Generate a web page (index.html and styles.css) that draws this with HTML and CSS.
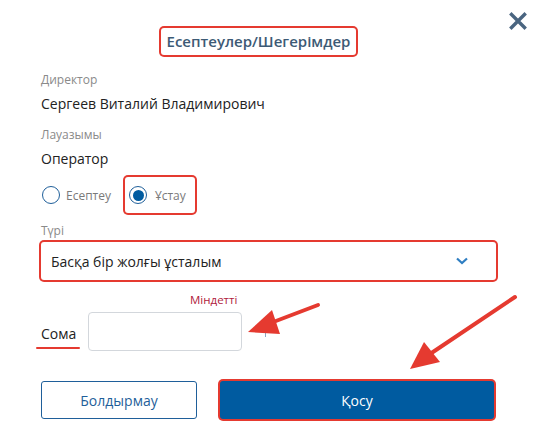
FILE: index.html
```html
<!DOCTYPE html>
<html lang="kk">
  <head>
    <meta charset="UTF-8" />
    <title>Есептеулер/Шегерімдер</title>
    <link rel="stylesheet" href="styles.css">
  </head>
  <body>
    <div class="modal">
      <button class="close-btn" aria-label="Жабу">
        <svg width="18" height="18" viewBox="0 0 18 18">
          <path d="M2.5 2.5 L15.5 15.5 M15.5 2.5 L2.5 15.5" stroke="#4a6580" stroke-width="3.4" stroke-linecap="square" />
        </svg>
      </button>

      <div class="modal-header">
        <h2 class="modal-title mark">Есептеулер/Шегерімдер</h2>
      </div>

      <div class="field">
        <div class="field-label">Директор</div>
        <div class="field-value">Сергеев Виталий Владимирович</div>
      </div>

      <div class="field">
        <div class="field-label">Лауазымы</div>
        <div class="field-value">Оператор</div>
      </div>

      <div class="radio-row">
        <label class="radio">
          <span class="radio-circle"></span>
          <span>Есептеу</span>
        </label>
        <label class="radio checked mark">
          <span class="radio-circle"></span>
          <span>Ұстау</span>
        </label>
      </div>

      <div class="select-group">
        <div class="field-label">Түрі</div>
        <div class="select mark">
          <span>Басқа бір жолғы ұсталым</span>
          <svg width="14" height="10" viewBox="0 0 14 10">
            <path d="M2 2.5 L7 7 L12 2.5" fill="none" stroke="#2f7ec2" stroke-width="2.2" />
          </svg>
        </div>
      </div>

      <div class="amount-group">
        <div class="required">Міндетті</div>
        <div class="amount-row">
          <label class="amount-label">Сома</label>
          <input class="amount-input" type="text" />
          <span class="cursor-mark"></span>
        </div>
      </div>

      <div class="actions">
        <button class="btn btn-outline">Болдырмау</button>
        <button class="btn btn-primary mark">Қосу</button>
      </div>

      <svg class="arrows" width="539" height="446" viewBox="0 0 539 446">
        <line x1="318" y1="305" x2="268" y2="324" stroke="#e53a30" stroke-width="4" stroke-linecap="round" />
        <polygon points="248,332 272,310 280,334" fill="#e53a30" />
        <line x1="515" y1="297" x2="430" y2="354" stroke="#e53a30" stroke-width="4" stroke-linecap="round" />
        <polygon points="410,369 424,342 440,362" fill="#e53a30" />
      </svg>
    </div>
  </body>
</html>
```

FILE: styles.css
```css
body {
  font-family: "Open Sans", "Noto Sans", sans-serif;
  background-color: #fff;
  margin: 0;
  color: #222;
}

.modal {
  position: relative;
  width: 539px;
  height: 446px;
  padding: 28px 43px 0 41px;
  box-sizing: border-box;
}

.close-btn {
  position: absolute;
  top: 12px;
  right: 12px;
  border: none;
  background: none;
  padding: 0;
  cursor: pointer;
}

.mark {
  box-shadow: 0 0 0 2px #e53a30;
  border-radius: 3px;
}

.modal-header {
  display: flex;
  justify-content: center;
  padding-right: 20px;
}

.modal-title {
  margin: 0;
  padding: 0 6px;
  font-size: 15px;
  font-weight: 600;
  line-height: 27px;
  color: #3d5a75;
}

.field {
  margin-top: 17px;
}

.field + .field {
  margin-top: 13px;
}

.field-label {
  font-size: 12px;
  line-height: 16px;
  color: #8a8a8a;
}

.field-value {
  font-size: 14px;
  line-height: 20px;
  margin-top: 6px;
}

.radio-row {
  display: flex;
  align-items: center;
  gap: 14px;
  margin-top: 8px;
  margin-left: 1px;
}

.radio {
  display: flex;
  align-items: center;
  gap: 6px;
  font-size: 12px;
  color: #7a7a7a;
  padding: 8px 0;
  height: 20px;
}

.radio.checked {
  gap: 8px;
  padding: 8px 9px 8px 4px;
}

.radio-circle {
  width: 16px;
  height: 16px;
  border: 1.5px solid #1f5f9a;
  border-radius: 50%;
  box-sizing: content-box;
  position: relative;
}

.radio.checked .radio-circle::after {
  content: "";
  position: absolute;
  top: 2.5px;
  left: 2.5px;
  width: 11px;
  height: 11px;
  border-radius: 50%;
  background: #005ba0;
}

.select-group {
  margin-top: 10px;
}

.select {
  display: flex;
  justify-content: space-between;
  align-items: center;
  height: 38px;
  margin-top: 3px;
  padding: 0 27px 0 10px;
  font-size: 14px;
  color: #222;
}

.amount-group {
  margin-top: 12px;
}

.required {
  font-size: 11.5px;
  line-height: 16px;
  color: #b0203c;
  margin-left: 149px;
}

.amount-row {
  display: flex;
  align-items: center;
  margin-top: 4px;
}

.amount-label {
  font-size: 14px;
  padding-top: 4px;
  width: 47px;
  position: relative;
}

.amount-label::after {
  content: "";
  position: absolute;
  left: -5px;
  bottom: -6px;
  width: 44px;
  height: 2px;
  background: #e53a30;
  border-radius: 1px;
}

.amount-input {
  width: 154px;
  height: 39px;
  box-sizing: border-box;
  border: 1px solid #d3d7dc;
  border-radius: 4px;
  outline: none;
}

.cursor-mark {
  width: 1px;
  height: 10px;
  margin: 0 0 0 23px;
  background: #8aa7c4;
}

.actions {
  display: flex;
  gap: 23px;
  margin-top: 30px;
}

.btn {
  height: 38px;
  font-family: "Open Sans", "Noto Sans", sans-serif;
  font-size: 14px;
  border-radius: 3px;
  cursor: pointer;
}

.btn-outline {
  width: 156px;
  background: #fff;
  border: 1px solid #1f5f9a;
  color: #1f5f9a;
}

.btn-primary {
  flex: 1;
  background: #005ba0;
  border: none;
  color: #fff;
  margin-right: 2px;
}

.arrows {
  position: absolute;
  top: 0;
  left: 0;
  pointer-events: none;
}
```
